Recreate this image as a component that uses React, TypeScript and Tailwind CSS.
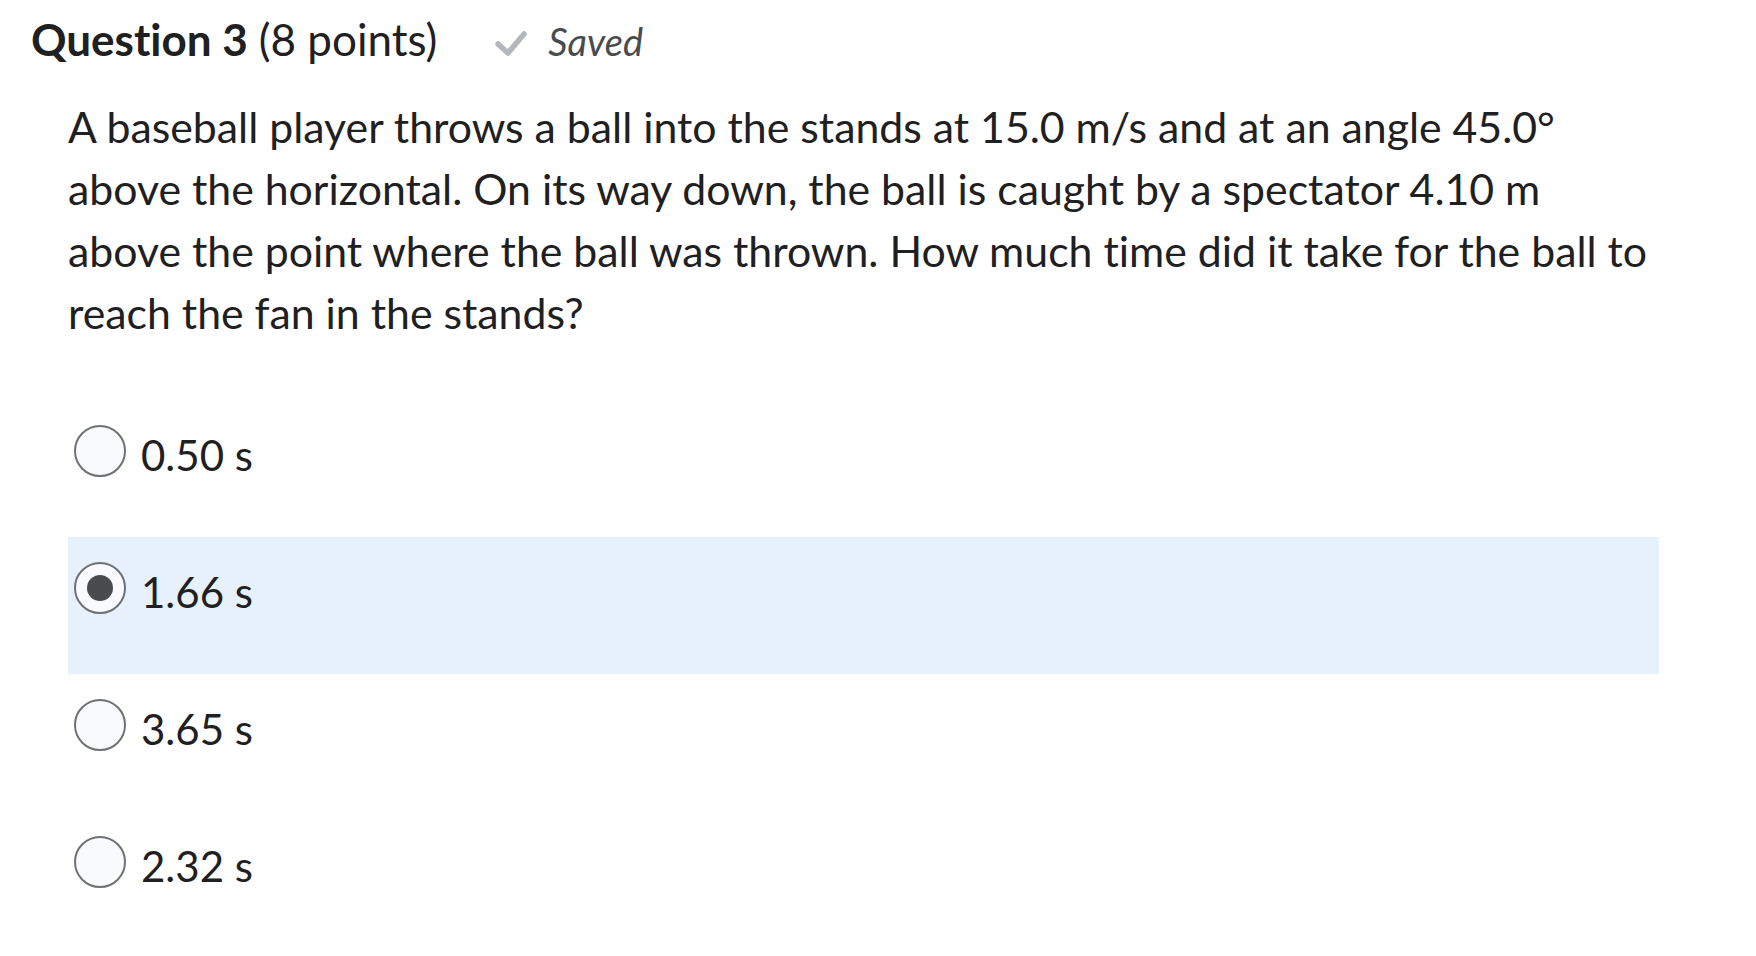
import React from "react";

const options = [
  { label: "0.50 s", selected: false },
  { label: "1.66 s", selected: true },
  { label: "3.65 s", selected: false },
  { label: "2.32 s", selected: false },
];

function Radio({ selected }: { selected: boolean }) {
  return (
    <div className="w-[52px] h-[52px] shrink-0 rounded-full border-2 border-[#6f7175] bg-[#f9fafe] flex items-center justify-center">
      {selected && <div className="w-[26px] h-[26px] rounded-full bg-[#494c4e]" />}
    </div>
  );
}

export default function App() {
  return (
    <div
      className="w-[1756px] h-[956px] bg-white text-[#1f2022] overflow-hidden [font-variant-ligatures:none]"
      style={{ fontFamily: "Lato, 'Noto Sans', sans-serif" }}
    >
      <div className="flex items-baseline pl-[31px] pt-[13px] leading-[1.2]">
        <span className="text-[44px] font-bold">Question 3</span>
        <span className="text-[44px] ml-[11px]">(8 points)</span>
        <span className="ml-[57px] flex items-baseline text-[#494c4e]">
          <svg width="34" height="28" viewBox="0 0 34 28" className="self-center mt-[4px]">
            <path
              d="M4 14 L14 23 L30 4"
              fill="none"
              stroke="#b3b7bb"
              strokeWidth="5.5"
              strokeLinecap="round"
              strokeLinejoin="round"
            />
          </svg>
          <span className="ml-[20px] text-[38px] italic">Saved</span>
        </span>
      </div>

      <p className="ml-[68px] mt-[30px] w-[1596px] text-[42.8px] leading-[62px]">
        A baseball player throws a ball into the stands at 15.0 m/s and at an angle 45.0° above the
        horizontal. On its way down, the ball is caught by a spectator 4.10 m above the point where the
        ball was thrown. How much time did it take for the ball to reach the fan in the stands?
      </p>

      <div className="ml-[68px] mt-[56px] w-[1591px] flex flex-col">
        {options.map((o) => (
          <div
            key={o.label}
            className={`h-[137px] flex items-start pt-[25px] pl-[6px] ${o.selected ? "bg-[#e7f1fb]" : ""}`}
          >
            <Radio selected={o.selected} />
            <span className="ml-[15px] text-[42px] leading-[56px] mt-[2px]">{o.label}</span>
          </div>
        ))}
      </div>
    </div>
  );
}
